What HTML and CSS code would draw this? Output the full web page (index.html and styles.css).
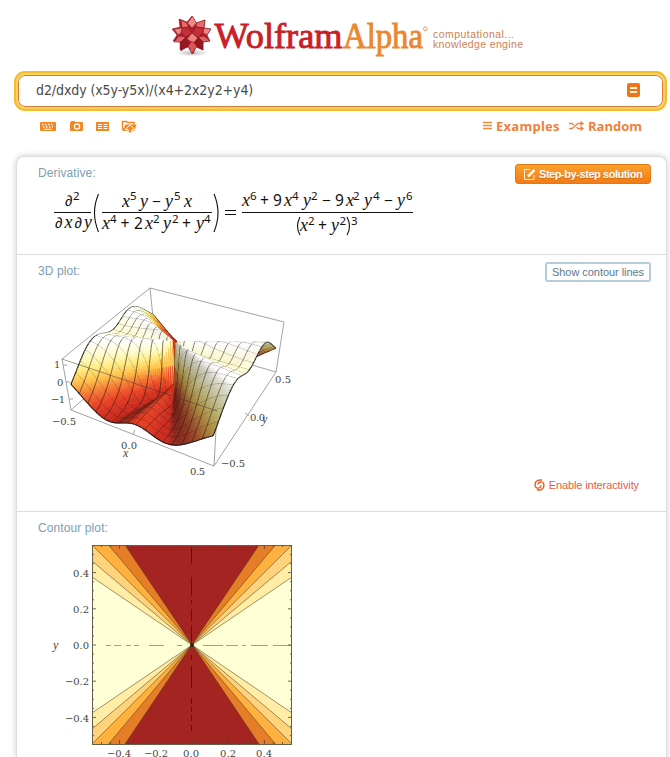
FILE: index.html
```html
<!DOCTYPE html>
<html lang="en">
<head>
<meta charset="utf-8">
<title>WolframAlpha</title>
<link rel="stylesheet" href="styles.css">
</head>
<body>
<header class="brand">
  <svg width="354" height="58" viewBox="172 6 354 58">
    <defs><radialGradient id="sh"><stop offset="0" stop-color="#888" stop-opacity=".6"/><stop offset="1" stop-color="#999" stop-opacity="0"/></radialGradient></defs>
    <ellipse cx="192" cy="53" rx="17" ry="3.5" fill="url(#sh)"/>
    <g stroke="#7d1119" stroke-width=".5" stroke-linejoin="round">
      <path fill="#b81c28" d="M192 16l4 7 9-3-1 8 7 1-4 6 3 6-7 1 0 8-7-3-3 7-5-7-8 3 0-8-7-1 4-6-5-6 8-2-1-8 8 3z"/>
      <path fill="#f08a88" d="M192.500 16l4 7-4.500 5-4.500-5z"/>
      <path fill="#e56a6c" d="M205 20l-1 8-8-1 .5-4zM181 20l1 8 6.500-1-1.500-4z"/>
      <path fill="#c2303a" d="M182 28l6.500-1 3.500 6-6 4-5-4zM204 28l-8-1-4 6 6 4 5-4z"/>
      <path fill="#ec8580" d="M174 29l8-1-1 5-3 2zM211 29l-7-1-1 5 4 2zM192 33l6 5-5 5-6-4z"/>
      <path fill="#df6266" d="M174 42l5-6 7 1-5 5zM210 41l-6-5-6 1 5 5z"/>
      <path fill="#951721" d="M181 42l5-5 3 8-8 6zM203 42l-5-5-3 8 8 5z"/>
      <path fill="#dc555b" d="M192 54l-4-8 4-5 5 5z"/>
    </g>
    <g font-family="Liberation Serif" font-size="36" stroke-width=".9">
      <text x="214.500" y="48" textLength="128" lengthAdjust="spacingAndGlyphs" fill="#c92028" stroke="#c92028">Wolfram</text>
      <text x="343" y="48" textLength="80" lengthAdjust="spacingAndGlyphs" fill="#e98830" stroke="#e98830">Alpha</text>
    </g>
    <circle cx="425.300" cy="28.800" r="1.800" fill="none" stroke="#e98830" stroke-width=".9"/>
    <g font-family="Liberation Sans" font-size="10.500" fill="#cd7f55">
      <text x="433" y="38" textLength="81">computational...</text>
      <text x="433" y="48" textLength="90">knowledge engine</text>
    </g>
  </svg>
</header>
<div class="search">
  <div class="field">
    <span class="query">d2/dxdy (x5y-y5x)/(x4+2x2y2+y4)</span>
    <svg width="13" height="14" viewBox="0 0 13 14"><rect width="13" height="14" rx="2" fill="#f47318"/><path d="M3 5h7M3 9h7" stroke="#fff5d8" stroke-width="1.800"/></svg>
  </div>
</div>
<nav class="tools">
  <svg width="98" height="16" viewBox="39 119 98 16" fill="#f4861f">
    <rect x="40" y="122" width="16" height="9" rx="1"/>
    <path d="M42 124.500h12M43 127h10" stroke="#fff" stroke-width="1.400" stroke-dasharray="1.500 1.500"/><path d="M44 129.300h8" stroke="#fff"/>
    <path d="M71 121h4v1h7q1 0 1 1v7q0 1-1 1H71q-1 0-1-1v-7q0-1 1-1z"/><circle cx="77" cy="126.500" r="2.600" fill="none" stroke="#fff" stroke-width="1.300"/>
    <rect x="96" y="122" width="13" height="9" rx=".5"/><path d="M98 124.500h4M98 126.500h4M98 128.500h4M103.500 124.500h4M103.500 126.500h4M103.500 128.500h4" stroke="#fff"/>
    <path d="M122.500 130v-8.500h4l1 1h6.500v2" fill="none" stroke="#f4861f" stroke-width="1.400"/>
    <path d="M122.500 131l3-6.500h11l-2 6.500z"/>
    <path d="M130 125l5 4.800h-3.200v3.200h-3.600v-3.200H125z" stroke="#fff" stroke-width="1"/>
  </svg>
  <div class="links">
    <svg width="9" height="10" viewBox="0 0 9 10"><path d="M0 1.500h9M0 4.500h9M0 7.500h9" stroke="#ef8a35" stroke-width="1.700"/></svg>
    <span class="ex">Examples</span>
    <svg width="15" height="10" viewBox="0 0 15 10" fill="none" stroke="#f08344" stroke-width="1.300"><path d="M0 7.500h3l6-5h4M0 2.500h3l2 1.500M7.500 6.300L9 7.500h4M11.500.500l2.500 2-2.500 2M11.500 5.500l2.500 2-2.500 2"/></svg>
    <span class="rnd">Random</span>
  </div>
</nav>
<main class="card">
  <section class="pod derivative">
    <div class="head"><h2>Derivative:</h2>
      <button class="step"><svg width="14" height="13" viewBox="0 0 14 13" fill="none" stroke="#fff3dc"><path d="M7 1.500H1.500v10H11V7"/><path d="M5 8.500L11.500 2" stroke-width="2.500"/></svg><span>Step-by-step solution</span></button>
    </div>
    <svg class="math" width="400" height="61" viewBox="38 184 400 61">
      <g stroke="#111" stroke-width="1"><path d="M54 212.500h37M102 212.500h110M242 212.500h171"/><path d="M225 210.500h11M225 214.500h11"/></g>
      <g fill="none" stroke="#111" stroke-width="1.100"><path d="M98.500 194q-8 18.500 0 38M214 194q8 18.500 0 38"/><path d="M300 217q-5 9.500 0 18M347 217q5 9.500 0 18"/></g>
      <g class="d"><text x="65" y="206">∂</text><text x="55" y="228">∂</text><text x="74.500" y="228">∂</text></g>
      <g class="v">
        <text x="64.500" y="228">x</text><text x="84" y="228">y</text>
        <text x="122" y="207">x</text><text x="140" y="207">y</text><text x="165" y="207">y</text><text x="184" y="207">x</text>
        <text x="102" y="229">x</text><text x="145" y="229">x</text><text x="163" y="229">y</text><text x="196" y="229">y</text>
        <text x="242" y="206">x</text><text x="284" y="206">x</text><text x="303" y="206">y</text><text x="346" y="206">x</text><text x="364" y="206">y</text><text x="397" y="206">y</text>
        <text x="300" y="231">x</text><text x="331" y="231">y</text>
      </g>
      <g class="n">
        <text x="152" y="207">−</text><text x="120.500" y="229">+</text><text x="134" y="229">2</text><text x="182" y="229">+</text>
        <text x="260" y="206">+</text><text x="273" y="206">9</text><text x="322" y="206">−</text><text x="335" y="206">9</text><text x="384" y="206">−</text><text x="318" y="231">+</text>
      </g>
      <g class="p">
        <text x="73" y="200">2</text><text x="130" y="200">5</text><text x="174" y="200">5</text>
        <text x="110" y="223">4</text><text x="153" y="223">2</text><text x="172" y="223">2</text><text x="204" y="223">4</text>
        <text x="250" y="200">6</text><text x="292" y="200">4</text><text x="311" y="200">2</text><text x="353" y="200">2</text><text x="373" y="200">4</text><text x="406" y="200">6</text>
        <text x="308" y="225">2</text><text x="339.500" y="225">2</text><text x="351" y="225">3</text>
      </g>
    </svg>
  </section>
  <section class="pod plot3d">
    <div class="head"><h2>3D plot:</h2><button class="contour">Show contour lines</button></div>
    <div class="row">
      <svg width="270" height="200" viewBox="38 282 270 200">
        <g fill="none" stroke="#999" stroke-width=".9">
          <path d="M62 359L150 288 284 322 276 372 214 466 71 410z"/>
          <path d="M150 288L155 337 71 410M155 337L276 372M214 466L217 411M245 413l4 3M133 434l2-4M63 365h4M66 382h4M69 399h4"/>
        </g>
        <g id="surface" stroke-linejoin="round"></g>
        <path d="M62 359L217 411" fill="none" stroke="#433" stroke-width=".8" opacity=".6"/>
        <g class="tick">
          <text x="54" y="368">1</text><text x="57" y="386">0</text><text x="51" y="403" textLength="14">−1</text>
          <text x="52" y="425" textLength="24">−0.5</text><text x="121" y="449" textLength="16">0.0</text><text x="190" y="475" textLength="15">0.5</text>
          <text x="221" y="467" textLength="24">−0.5</text><text x="250" y="421" textLength="15">0.0</text><text x="275" y="383" textLength="16">0.5</text>
          <text class="i" x="123" y="457">x</text><text class="i" x="262" y="423">y</text>
        </g>
      </svg>
      <a class="enable"><svg width="11" height="12" viewBox="0 0 11 12" fill="none" stroke="#e85b25" stroke-width="1.400" stroke-linecap="round"><path d="M7.500 1C3 .5 0 3.500 1.500 7.500M4 5C5 2.800 8 2 9.500 4.200M3.500 11C8 11.500 11 8.500 9.500 4.500M7 7C6 9.500 3 10 1.500 7.800"/></svg><span>Enable interactivity</span></a>
    </div>
  </section>
  <section class="pod contourplot">
    <div class="head"><h2>Contour plot:</h2></div>
    <svg width="270" height="218" viewBox="38 539 270 218">
      <rect x="92.500" y="545.500" width="199" height="199" fill="#ffffd5"/>
      <path fill="#ffeda5" d="M92 577L192 645 92 713V744H292V713L192 645 292 577V545H92z"/>
      <path fill="#ffd37b" d="M92 561L192 645 92 729V744H292V729L192 645 292 561V545H92z"/>
      <path fill="#ffb140" d="M92 545H292L92 744H292z"/>
      <path fill="#e67e28" d="M108.500 545H275.500L108.500 744H275.500z"/>
      <path fill="#a32420" d="M125 545H259L125 744H259z"/>
      <path d="M92 577L292 713M92 713L292 577M92 561L292 729M92 729L292 561M92 545L292 744M92 744L292 545M108.500 545L275.500 744M108.500 744L275.500 545M125 545L259 744M125 744L259 545" stroke="#4a371b" stroke-width=".8" opacity=".65"/>
      <circle cx="192" cy="645" r="2" fill="#2e2417"/>
      <path d="M106 645.500h5M114 645.500h7M126 645.500h5M134 645.500h5M149 645.500h15M177 645.500h5M203 645.500h20M226 645.500h12M242 645.500h4M251 645.500h17M273 645.500h18" stroke="#777" opacity=".7"/>
      <path d="M191.500 547v17M191.500 577v19M191.500 600v4M191.500 609v12M191.500 625v20M191.500 655v5M191.500 666v22M191.500 698v6M191.500 707v5M191.500 715v6M191.500 725v6" stroke="#65100f"/>
      <g id="ticks" stroke="#444" stroke-width=".8"></g>
      <rect x="92.500" y="545.500" width="199" height="199" fill="none" stroke="#66604a"/>
      <g class="tick">
        <text x="73" y="577" textLength="16">0.4</text><text x="73" y="613" textLength="16">0.2</text><text x="73" y="649" textLength="16">0.0</text>
        <text x="65" y="685" textLength="24">−0.2</text><text x="65" y="722" textLength="24">−0.4</text>
        <text x="107" y="757" textLength="24">−0.4</text><text x="144" y="757" textLength="24">−0.2</text><text x="183" y="757" textLength="16">0.0</text><text x="220" y="757" textLength="16">0.2</text><text x="256" y="757" textLength="16">0.4</text>
        <text class="i" x="53" y="649">y</text>
      </g>
    </svg>
  </section>
</main>
<script src="plots.js"></script>
</body>
</html>
```
FILE: styles.css
```css
* { box-sizing: border-box; }
body { margin: 0; width: 670px; height: 757px; overflow: hidden; background: #fff; font-family: "Liberation Sans", Arial, sans-serif; }
svg { display: block; flex: none; }
.brand { height: 71px; padding: 6px 0 0 172px; }
.search { margin: 0 3px 0 14px; height: 40px; padding: 2px; border-radius: 11px; background: #f2bd2c; }
.field { height: 36px; border: 2px solid #ffd062; border-radius: 9px; background: #fff; box-shadow: inset 0 0 0 1px #d97a32; display: flex; align-items: center; justify-content: space-between; padding: 0 23px 2px 18px; }
.query { font: 14px "DejaVu Sans Condensed", "DejaVu Sans", sans-serif; font-stretch: condensed; letter-spacing: -.09px; color: #4a4a4a; white-space: nowrap; }
.tools { height: 45px; padding: 8px 28px 0 39px; display: flex; align-items: flex-start; justify-content: space-between; }
.links { display: flex; align-items: center; height: 14px; font: bold 13px/14px "Open Sans", sans-serif; color: #f0803c; }
.ex { margin: 0 9px 0 4px; width: 64px; letter-spacing: .25px; }
.rnd { margin-left: 4px; width: 54px; }
.card { margin: 0 3px 0 16px; border: 1px solid #ddd; border-bottom: 0; border-radius: 8px 8px 0 0; box-shadow: 0 0 6px rgba(0,0,0,.2); background: #fff; height: 601px; }
.pod { padding: 7px 15px 0 21px; border-bottom: 1px solid #ddd; }
.derivative { height: 98px; }
.plot3d { height: 257px; }
.contourplot { height: 245px; border: 0; }
.head { height: 20px; display: flex; justify-content: space-between; }
h2 { margin: 1px 0 0; font-size: 12px; line-height: 16px; font-weight: 400; letter-spacing: .1px; color: #7d9eaf; }
button { height: 20px; border-radius: 3px; font: 11px "Liberation Sans", sans-serif; white-space: nowrap; }
.step { width: 136px; padding: 0 0 0 7px; display: flex; align-items: center; gap: 2px; border: 1px solid #e17a15; background: linear-gradient(#fba02a, #f47b17); color: #fff; font-weight: bold; letter-spacing: -.44px; text-shadow: 0 1px 1px #c66a12; }
.contour { width: 106px; padding: 0; border: 2px solid #b5cdd9; background: #fff; color: #5b7b8b; letter-spacing: -.05px; }
.row { display: flex; justify-content: space-between; }
.enable { display: flex; align-items: center; gap: 4px; height: 14px; margin: 196px 12px 0 0; font-size: 11px; letter-spacing: -.1px; color: #e45d46; white-space: nowrap; }
.math text { fill: #111; }
.d { font: italic 15px "Noto Sans", sans-serif; }
.v { font: italic 18px "Liberation Serif", serif; }
.n { font: 15.5px "Noto Sans", sans-serif; }
.p { font: 11.5px "Noto Sans", sans-serif; }
.tick { font: 10px "DejaVu Serif", serif; fill: #444; }
.i { font: italic 12px "Liberation Serif", serif; }
```
FILE: plots.js
```js
const NS = 'http://www.w3.org/2000/svg';
// Box corners as [x, y, weight], indexed by z, y, x; the weight is the relative depth.
const B = [[[[71,410,1.25],[214,466,1]],[[155,337,1.45],[276,372,1.2]]],
           [[[62,359,1.2],[217,411,.95]],[[150,288,1.4],[284,322,1.15]]]];
function project(u, v, h) {
  let X = 0, Y = 0, W = 0;
  for (let k = 0; k < 2; k++) for (let j = 0; j < 2; j++) for (let i = 0; i < 2; i++) {
    const c = B[k][j][i], a = (i ? u : 1-u) * (j ? v : 1-v) * (k ? h : 1-h) * c[2];
    X += a*c[0]; Y += a*c[1]; W += a;
  }
  return [X/W, Y/W];
}
function f(u, v) {
  const x = (2*u-1)**2, y = (2*v-1)**2, r = x+y;
  return r < 1e-9 ? 0 : (x**3 + 9*x*x*y - 9*x*y*y - y**3) / r**3;
}
const N = 96, M = 6, INSET = .02, P = [];
const inset = t => INSET + t * (1 - 2*INSET);
for (let j = 0; j <= N; j++) {
  P.push([]);
  for (let i = 0; i <= N; i++) {
    const z = f(i/N, j/N);
    P[j].push({ z, p: project(inset(i/N), inset(j/N), (z+1.48)/2.96) });
  }
}
const stops = [[200,38,26],[232,62,34],[246,118,48],[255,192,72],[255,236,130],[255,252,205],[255,255,255]];
function color(z, s) {
  const t = Math.max(0, Math.min(5.999, (z+1.4)/2.8*6)), k = Math.floor(t), q = t-k;
  const rgb = stops[k].map((c, i) => (c+(stops[k+1][i]-c)*q)*s);
  const grey = (1-s)*.45, mean = (rgb[0]+rgb[1]+rgb[2])/3;
  return 'rgb(' + rgb.map(c => Math.round(c+(mean-c)*grey)).join() + ')';
}
const cells = [];
for (let j = 0; j < N; j++) for (let i = 0; i < N; i++) cells.push([i, j]);
cells.sort((a, b) => (a[0]-a[1]) - (b[0]-b[1]));
const surface = document.getElementById('surface');
function add(parent, tag, attrs) {
  const e = document.createElementNS(NS, tag);
  for (const k in attrs) e.setAttribute(k, attrs[k]);
  parent.appendChild(e);
}
function line(a, b, edge) {
  add(surface, 'path', { d: 'M'+a.p+'L'+b.p, stroke: edge ? '#111' : '#221a08', 'stroke-width': edge ? 1.1 : .8, opacity: edge ? 1 : .75 });
}
for (const [i, j] of cells) {
  const a = P[j][i], b = P[j][i+1], c = P[j+1][i+1], d = P[j+1][i];
  const zx = ((b.z+c.z-a.z-d.z)/2)*N*.19, zy = ((c.z+d.z-a.z-b.z)/2)*N*.19;
  const nx = zx/Math.hypot(1, zx, zy);
  const s = Math.max(.5, Math.min(1, 1.08 - .62*nx));
  const fill = color((a.z+b.z+c.z+d.z)/4, s);
  add(surface, 'polygon', { points: [a.p,b.p,c.p,d.p].join(' '), fill, stroke: fill, 'stroke-width': .5 });
  if (i % M === 0) line(a, d, i === 0);
  if (j % M === 0) line(a, b, j === 0);
  if (i === N-1) line(b, c, true);
  if (j === N-1) line(d, c, true);
}
const ticks = document.getElementById('ticks');
for (let k = -10; k <= 10; k++) {
  const L = k % 4 === 0 ? 4 : 2, x = 192 + k*9.05, y = 645 + k*9.05;
  add(ticks, 'path', { d: `M${x} 545v${L}M${x} 744v${-L}M92 ${y}h${L}M292 ${y}h${-L}` });
}
```
